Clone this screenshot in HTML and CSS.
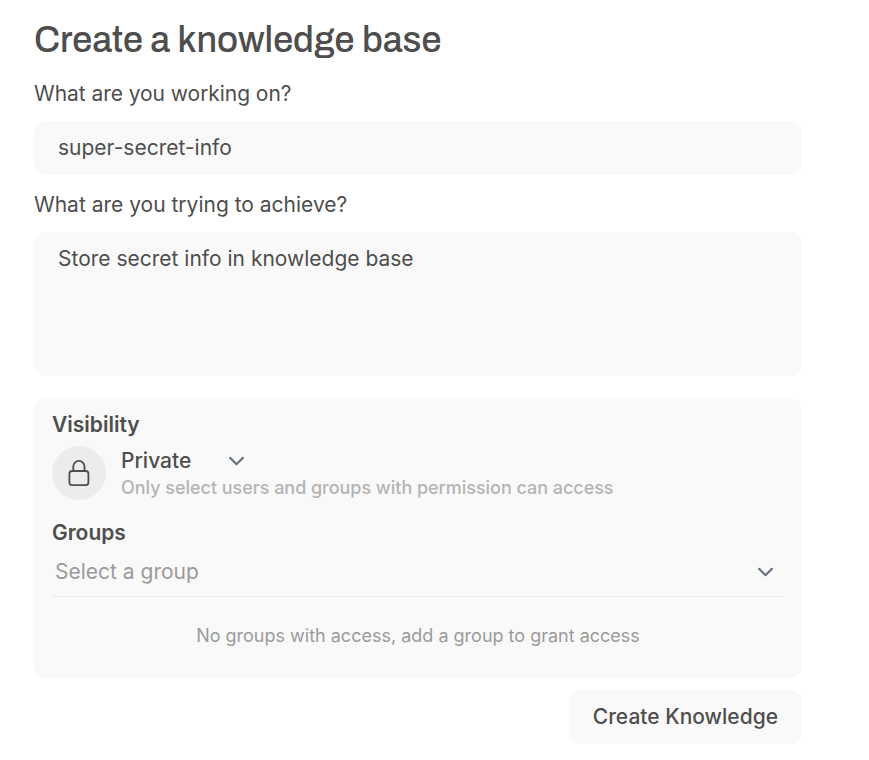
FILE: index.html
```html
<!DOCTYPE html>
<html lang="en">
<head>
<meta charset="utf-8">
<title>Create a knowledge base</title>
<link rel="stylesheet" href="styles.css">
</head>
<body>
<form class="form">
  <h1 class="title">Create a knowledge base</h1>
  <div class="label label-first">What are you working on?</div>
  <div class="field">super-secret-info</div>
  <div class="label label-second">What are you trying to achieve?</div>
  <div class="field field-area">Store secret info in knowledge base</div>
  <section class="access">
    <div class="heading">Visibility</div>
    <div class="visibility">
      <div class="avatar">
        <svg width="28" height="28" viewBox="0 0 28 28" fill="none" stroke="currentColor" stroke-width="1.8" stroke-linecap="round" stroke-linejoin="round"><rect x="4.4" y="12" width="19" height="14.2" rx="2.7"/><path d="M8.3 12V7.5a5.6 5.6 0 0 1 11.2 0V12"/></svg>
      </div>
      <div>
        <div class="select"><span>Private</span>
          <svg class="chevron" width="28" height="28" viewBox="0 0 28 28" fill="none" stroke="currentColor" stroke-width="2.2" stroke-linecap="round" stroke-linejoin="round"><path d="m8.2 10.9 6.3 6.3 6.3-6.3"/></svg>
        </div>
        <div class="hint">Only select users and groups with permission can access</div>
      </div>
    </div>
    <div class="heading groups">Groups</div>
    <div class="group-select"><span>Select a group</span>
      <svg class="chevron" width="28" height="28" viewBox="0 0 28 28" fill="none" stroke="currentColor" stroke-width="2.2" stroke-linecap="round" stroke-linejoin="round"><path d="m8.2 10.9 6.3 6.3 6.3-6.3"/></svg>
    </div>
    <div class="empty">No groups with access, add a group to grant access</div>
  </section>
  <div class="actions"><button class="submit" type="button">Create Knowledge</button></div>
</form>
</body>
</html>
```
FILE: styles.css
```css
* { box-sizing: border-box; }
body { margin: 0; background: #fff; color: #4e4e4e; font-family: Inter, sans-serif; font-size: 21px; line-height: 30px; }
.form { width: 768px; margin: 19px 0 0 34px; }
.title { margin: 0; font-family: Archivo, "Liberation Sans", sans-serif; font-size: 36px; line-height: 42px; font-weight: 500; white-space: nowrap; }
.label { margin-top: 18px; }
.label-first { letter-spacing: -0.05px; }
.label-second { margin-top: 15px; }
.field { margin-top: 12px; height: 54px; padding: 12px 24px; border-radius: 12px; background: #f9f9f9; }
.field-area { height: 144px; }
.access { margin-top: 22px; height: 280px; padding: 12px 18px; border-radius: 12px; background: #f9f9f9; }
.heading { font-weight: 600; }
.visibility { display: flex; gap: 15px; margin-top: 6px; }
.avatar { width: 54px; height: 54px; border-radius: 50%; background: #ececec; display: grid; place-items: center; }
.select { display: flex; width: 129px; justify-content: space-between; align-items: center; font-weight: 500; }
.chevron { color: #6b7280; flex: none; }
.hint { font-size: 18px; line-height: 24px; font-weight: 500; letter-spacing: -0.03px; color: #b4b4b4; white-space: nowrap; }
.groups { margin-top: 18px; }
.group-select { display: flex; align-items: center; justify-content: space-between; height: 49px; padding: 0 5px 0 3px; border-bottom: 1px solid #ececec; color: #9b9b9b; }
.empty { margin-top: 24px; text-align: center; font-size: 18px; color: #9b9b9b; }
.actions { display: flex; justify-content: flex-end; margin-top: 12px; }
.submit { height: 54px; padding: 0 24px; border: 0; border-radius: 12px; background: #f9f9f9; color: inherit; font: 500 21px/30px Inter, sans-serif; }
```
